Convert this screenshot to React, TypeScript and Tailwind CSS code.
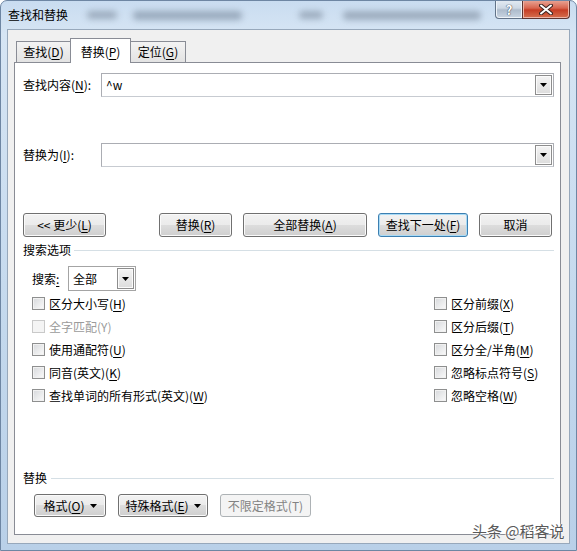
import React from 'react';

// Windows 7 style "查找和替换" dialog

function U({ children }: { children: React.ReactNode }) {
  return <span className="underline underline-offset-[2px] decoration-[1px]">{children}</span>;
}

function Arrow() {
  return (
    <svg width="7" height="4" viewBox="0 0 7 4">
      <path d="M0 0h7L3.5 4z" fill="#000" />
    </svg>
  );
}

const btnBase =
  'h-full flex items-center justify-center rounded-[3px] border text-[12px] leading-[16px]';
const btnNormal =
  'border-[#707070] bg-[linear-gradient(#f2f2f2_0%,#ebebeb_50%,#dddddd_50%,#cfcfcf_100%)] shadow-[inset_0_0_0_1px_#fafafa] text-black';

function Button({
  children,
  className = '',
  primary = false,
  disabled = false,
}: {
  children: React.ReactNode;
  className?: string;
  primary?: boolean;
  disabled?: boolean;
}) {
  let look = btnNormal;
  if (primary) {
    look =
      'border-[#3c7fb1] bg-[linear-gradient(#f2f2f2_0%,#ebebeb_50%,#dddddd_50%,#cfcfcf_100%)] shadow-[inset_0_0_0_1px_#a9dbf6] text-black';
  }
  if (disabled) {
    look = 'border-[#adb2b5] bg-[#f4f4f4] text-[#838383]';
  }
  return <div className={`${btnBase} ${look} ${className}`}>{children}</div>;
}

function Checkbox({ label, disabled = false }: { label: React.ReactNode; disabled?: boolean }) {
  return (
    <div className="h-[23px] flex items-center gap-[4px]">
      <div
        className={
          disabled
            ? 'w-[13px] h-[13px] border border-[#c9c9c9] bg-[#f4f4f4]'
            : 'w-[13px] h-[13px] border border-[#8e8f8f] bg-[linear-gradient(135deg,#d6d8db,#fbfbfb)] shadow-[inset_0_0_0_1px_#f1f1f1]'
        }
      />
      <span className={disabled ? 'text-[#9b9b9b]' : 'text-black'}>{label}</span>
    </div>
  );
}

function ComboButton() {
  return (
    <div className="w-[17px] h-full flex items-center justify-center border border-[#8d8d8d] bg-[linear-gradient(#f4f4f4,#dcdcdc)] shadow-[inset_0_0_0_1px_#fbfbfb]">
      <Arrow />
    </div>
  );
}

function ComboInput({ value }: { value?: string }) {
  return (
    <div className="flex-1 h-[24px] flex items-stretch border border-[#abadb3] border-b-[#c7cbd1] bg-white p-px">
      <div className="flex-1 pl-[3px] flex items-center text-black">{value}</div>
      <ComboButton />
    </div>
  );
}

function SectionHeader({ title, gap }: { title: string; gap: string }) {
  return (
    <div className={`h-[14px] flex items-center ${gap}`}>
      <span className="leading-[14px]">{title}</span>
      <div className="flex-1 h-px bg-[#d5dfe5]" />
    </div>
  );
}

export default function App() {
  const leftChecks: { label: React.ReactNode; disabled?: boolean }[] = [
    { label: <>区分大小写(<U>H</U>)</> },
    { label: <>全字匹配(Y)</>, disabled: true },
    { label: <>使用通配符(<U>U</U>)</> },
    { label: <>同音(英文)(<U>K</U>)</> },
    { label: <>查找单词的所有形式(英文)(<U>W</U>)</> },
  ];
  const rightChecks: React.ReactNode[] = [
    <>区分前缀(<U>X</U>)</>,
    <>区分后缀(<U>T</U>)</>,
    <>区分全/半角(<U>M</U>)</>,
    <>忽略标点符号(<U>S</U>)</>,
    <>忽略空格(<U>W</U>)</>,
  ];

  return (
    <div className="w-[577px] h-[551px] relative flex flex-col overflow-hidden rounded-t-[7px] border border-[#6e86a3] bg-[linear-gradient(180deg,#c9dcf0_0%,#d6e5f4_6%,#c3d8ed_60%,#b9d0e8_100%)] font-['Noto_Sans_CJK_SC',sans-serif] text-[12px] leading-[16px] text-black">
      {/* Title bar */}
      <div className="h-[28px] flex shrink-0">
        <span className="self-center pl-[7px] text-[12px] text-black">查找和替换</span>
        {/* blurred glass background */}
        <div className="self-center flex items-center opacity-60">
          <div className="ml-[19px] w-[30px] h-[8px] rounded-sm bg-[#7b8a9c] blur-[3px]" />
          <div className="ml-[16px] w-[109px] h-[9px] rounded-sm bg-[#76879b] blur-[3px]" />
          <div className="ml-[57px] w-[24px] h-[8px] rounded-sm bg-[#7b8a9c] blur-[3px]" />
          <div className="ml-[20px] w-[138px] h-[9px] rounded-sm bg-[#7b8a9c] blur-[3px]" />
        </div>
        <div className="ml-auto mr-[6px] -mt-px flex self-start h-[19px]">
          <div className="w-[28px] h-full flex items-center justify-center rounded-bl-[4px] border border-t-0 border-[#627388] bg-[linear-gradient(#e4ebf3_0%,#cdd8e4_45%,#aebccc_55%,#c9d5e2_100%)] shadow-[inset_0_0_0_1px_#eef3f8]">
            <span className="text-[13px] leading-[13px] font-bold text-white [text-shadow:0_0_1px_#2f3b4a,0_0_1px_#2f3b4a]">
              ?
            </span>
          </div>
          <div className="w-[48px] h-full -ml-px flex items-center justify-center rounded-br-[4px] border border-t-0 border-[#5e3430] bg-[linear-gradient(#eaa99a_0%,#d8654f_45%,#c63d24_55%,#d5704f_100%)] shadow-[inset_0_0_0_1px_#eeb4a6]">
            <svg width="14" height="11" viewBox="0 0 14 11">
              <path d="M2 1.5L12 9.5M12 1.5L2 9.5" stroke="#3d2421" strokeWidth="4" strokeLinecap="round" />
              <path d="M2 1.5L12 9.5M12 1.5L2 9.5" stroke="#fff" strokeWidth="2" strokeLinecap="round" />
            </svg>
          </div>
        </div>
      </div>

      {/* Client area */}
      <div className="flex-1 mx-[6px] mb-[6px] flex flex-col border border-[#97a8bb] bg-[#f0f0f0] pt-[8px] pl-[6px] pr-[8px] pb-[8px]">
        {/* Tabs */}
        <div className="flex items-end ml-[2px] h-[24px]">
          <div className="w-[55px] h-[21px] flex items-center justify-center border border-b-0 border-[#898c95] bg-[linear-gradient(#f3f3f3,#e3e3e3)]">
            查找(<U>D</U>)
          </div>
          <div className="relative z-10 -ml-px w-[61px] h-[25px] -mb-px pt-[2px] flex items-center justify-center border border-b-0 border-[#898c95] bg-white">
            替换(<U>P</U>)
          </div>
          <div className="-ml-px w-[56px] h-[21px] flex items-center justify-center border border-b-0 border-[#898c95] bg-[linear-gradient(#f3f3f3,#e3e3e3)]">
            定位(<U>G</U>)
          </div>
        </div>

        {/* Panel */}
        <div className="flex-1 flex flex-col border border-[#898c95] bg-white pt-[10px] pl-[8px] pr-[6px] pb-[17px]">
          <div className="flex items-center">
            <span className="w-[78px]">
              查找内容(<U>N</U>):
            </span>
            <ComboInput value="^w" />
          </div>
          <div className="flex items-center mt-[46px]">
            <span className="w-[78px]">
              替换为(<U>I</U>):
            </span>
            <ComboInput />
          </div>

          <div className="flex h-[24px] mt-[46px]">
            <Button className="w-[83px]">
              &lt;&lt; 更少(<U>L</U>)
            </Button>
            <div className="ml-auto mr-[2px] flex gap-[11px] h-full">
              <Button className="w-[73px]">
                替换(<U>R</U>)
              </Button>
              <Button className="w-[124px]">
                全部替换(<U>A</U>)
              </Button>
              <Button className="w-[90px]" primary>
                查找下一处(<U>F</U>)
              </Button>
              <Button className="w-[73px]">取消</Button>
            </div>
          </div>

          <div className="mt-[6px]">
            <SectionHeader title="搜索选项" gap="gap-[3px]" />
          </div>

          <div className="pl-[9px]">
            <div className="mt-[9px] h-[25px] flex items-center">
              <span className="w-[36px]">
                搜索<U>:</U>
              </span>
              <div className="w-[68px] h-[25px] flex items-stretch border border-[#a4a4a4] bg-white p-px">
                <div className="flex-1 pl-[3px] flex items-center">全部</div>
                <ComboButton />
              </div>
            </div>

            <div className="mt-px flex">
              <div className="w-[402px] flex flex-col">
                {leftChecks.map((c, i) => (
                  <Checkbox key={i} label={c.label} disabled={c.disabled} />
                ))}
              </div>
              <div className="flex flex-col">
                {rightChecks.map((c, i) => (
                  <Checkbox key={i} label={c} />
                ))}
              </div>
            </div>
          </div>

          <div className="flex-1" />

          <SectionHeader title="替换" gap="gap-[4px]" />
          <div className="mt-[9px] h-[23px] pl-[11px] flex gap-[12px]">
            <Button className="w-[72px] gap-[5px]">
              <span>
                格式(<U>O</U>)
              </span>
              <Arrow />
            </Button>
            <Button className="w-[90px] gap-[5px]">
              <span>
                特殊格式(<U>E</U>)
              </span>
              <Arrow />
            </Button>
            <Button className="w-[91px]" disabled>
              不限定格式(T)
            </Button>
          </div>
        </div>
      </div>

      {/* watermark */}
      <div className="absolute left-[471px] top-[521px] text-[15px] leading-[18px] text-[#595959] [text-shadow:0_0_2px_#fff,0_0_2px_#fff,0_0_1px_#fff] whitespace-nowrap">
        头条 @稻客说
      </div>
    </div>
  );
}
